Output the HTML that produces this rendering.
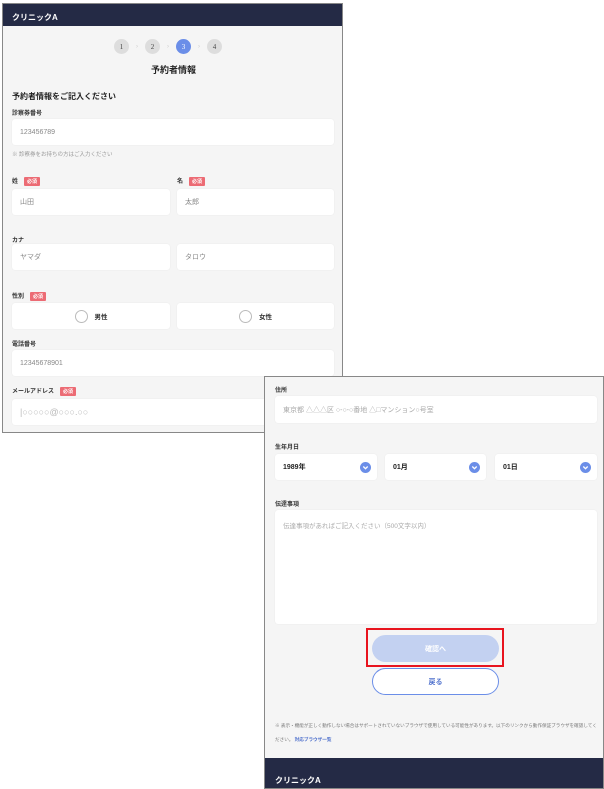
<!DOCTYPE html>
<html><head><meta charset="utf-8"><style>
*{box-sizing:border-box;margin:0;padding:0}
body{width:604px;height:789px;background:#fff;position:relative;overflow:hidden;font-family:"Liberation Sans","Noto Sans CJK JP",sans-serif;color:#222}
.p{position:absolute;background:#f5f5f5;border:1px solid #888;overflow:hidden}
.a{position:absolute}
.hd{background:#242a45;color:#fff;font-weight:bold;font-size:8px}
.lb{font-size:6px;font-weight:bold;color:#333}
.rq{display:inline-block;background:#ec6b74;color:#fff;font-size:5px;padding:1px 3px;border-radius:1px;margin-left:6px;vertical-align:middle}
.in{background:#fff;border-radius:3px;box-shadow:0 0 1px #ddd;font-size:7px;color:#888;padding-left:8px;display:flex;align-items:center}
.c{width:15px;height:15px;border-radius:50%;background:#ddd;color:#444;font-size:7px;font-family:"Liberation Serif",serif;display:flex;align-items:center;justify-content:center}
.ar{font-size:6px;color:#ccc}
.dd{position:absolute;right:6px;top:8px;width:11px;height:11px}
</style></head><body>
<div class="p" style="left:2px;top:3px;width:341px;height:430px">
 <div class="a hd" style="left:0;top:0;width:341px;height:22px;padding:8px 0 0 9px">クリニックA</div>
 <div class="a" style="left:111px;top:35px;display:flex;align-items:center;gap:7px">
  <div class="c">1</div><span class="ar">›</span><div class="c">2</div><span class="ar">›</span><div class="c" style="background:#6b8ee8;color:#fff">3</div><span class="ar">›</span><div class="c">4</div>
 </div>
 <div class="a" style="left:0;width:341px;top:59px;text-align:center;font-size:9px;font-weight:bold">予約者情報</div>
 <div class="a" style="left:9px;top:87px;font-size:8px;font-weight:bold">予約者情報をご記入ください</div>
 <div class="a lb" style="left:9px;top:104px">診察券番号</div>
 <div class="a in" style="left:9px;top:115px;width:322px;height:26px">123456789</div>
 <div class="a" style="left:9px;top:146px;font-size:5.5px;color:#999">※ 診察券をお持ちの方はご入力ください</div>
 <div class="a lb" style="left:9px;top:172px">姓<span class="rq">必須</span></div>
 <div class="a lb" style="left:174px;top:172px">名<span class="rq">必須</span></div>
 <div class="a in" style="left:9px;top:185px;width:158px;height:26px">山田</div>
 <div class="a in" style="left:174px;top:185px;width:157px;height:26px">太郎</div>
 <div class="a lb" style="left:9px;top:231px">カナ</div>
 <div class="a in" style="left:9px;top:240px;width:158px;height:26px">ヤマダ</div>
 <div class="a in" style="left:174px;top:240px;width:157px;height:26px">タロウ</div>
 <div class="a lb" style="left:9px;top:287px">性別<span class="rq">必須</span></div>
 <div class="a in" style="left:9px;top:299px;width:158px;height:26px;justify-content:center;padding:0;color:#333;font-weight:bold;font-size:6.5px"><span style="width:13px;height:13px;border:1px solid #bbb;border-radius:50%;margin-right:7px"></span>男性</div>
 <div class="a in" style="left:174px;top:299px;width:157px;height:26px;justify-content:center;padding:0;color:#333;font-weight:bold;font-size:6.5px"><span style="width:13px;height:13px;border:1px solid #bbb;border-radius:50%;margin-right:7px"></span>女性</div>
 <div class="a lb" style="left:9px;top:335px">電話番号</div>
 <div class="a in" style="left:9px;top:346px;width:322px;height:26px">12345678901</div>
 <div class="a lb" style="left:9px;top:382px">メールアドレス<span class="rq">必須</span></div>
 <div class="a in" style="left:9px;top:395px;width:322px;height:26px;color:#bbb;font-size:9px">|○○○○○@○○○.○○</div>
</div>
<div class="p" style="left:264px;top:376px;width:340px;height:413px">
 <div class="a lb" style="left:10px;top:8px">住所</div>
 <div class="a in" style="left:10px;top:19px;width:322px;height:27px;color:#aaa;font-size:7px">東京都 △△△区 ○-○-○番地 △□マンション○号室</div>
 <div class="a lb" style="left:10px;top:65px">生年月日</div>
 <div class="a in" style="left:10px;top:77px;width:102px;height:26px;color:#222;font-weight:bold">1989年<svg class="dd" viewBox="0 0 11 11"><circle cx="5.5" cy="5.5" r="5.5" fill="#6b8ee8"/><path d="M3.3 4.5L5.5 6.7 7.7 4.5" stroke="#fff" stroke-width="1.3" fill="none"/></svg></div>
 <div class="a in" style="left:120px;top:77px;width:101px;height:26px;color:#222;font-weight:bold">01月<svg class="dd" viewBox="0 0 11 11"><circle cx="5.5" cy="5.5" r="5.5" fill="#6b8ee8"/><path d="M3.3 4.5L5.5 6.7 7.7 4.5" stroke="#fff" stroke-width="1.3" fill="none"/></svg></div>
 <div class="a in" style="left:230px;top:77px;width:102px;height:26px;color:#222;font-weight:bold">01日<svg class="dd" viewBox="0 0 11 11"><circle cx="5.5" cy="5.5" r="5.5" fill="#6b8ee8"/><path d="M3.3 4.5L5.5 6.7 7.7 4.5" stroke="#fff" stroke-width="1.3" fill="none"/></svg></div>
 <div class="a lb" style="left:10px;top:122px">伝達事項</div>
 <div class="a in" style="left:10px;top:133px;width:322px;height:114px;align-items:flex-start;padding-top:10px;color:#aaa;font-size:6.5px">伝達事項があればご記入ください（500文字以内）</div>
 <div class="a" style="left:101px;top:251px;width:138px;height:39px;border:2px solid #e8141e"></div>
 <div class="a" style="left:107px;top:258px;width:127px;height:27px;border-radius:14px;background:#c3d1f1;color:#fff;font-size:7px;font-weight:bold;display:flex;align-items:center;justify-content:center">確認へ</div>
 <div class="a" style="left:107px;top:291px;width:127px;height:27px;border-radius:14px;background:#fff;border:1px solid #6b8ee8;color:#4d6fcc;font-size:7px;font-weight:bold;display:flex;align-items:center;justify-content:center">戻る</div>
 <div class="a" style="left:10px;top:342px;width:325px;font-size:4.6px;line-height:14px;color:#777">※ 表示・機能が正しく動作しない場合はサポートされていないブラウザで使用している可能性があります。以下のリンクから動作保証ブラウザを確認してください。 <span style="color:#4d6fcc;font-weight:bold">対応ブラウザ一覧</span></div>
 <div class="a hd" style="left:0;top:381px;width:340px;height:32px;padding:17px 0 0 10px">クリニックA</div>
</div>
</body></html>
